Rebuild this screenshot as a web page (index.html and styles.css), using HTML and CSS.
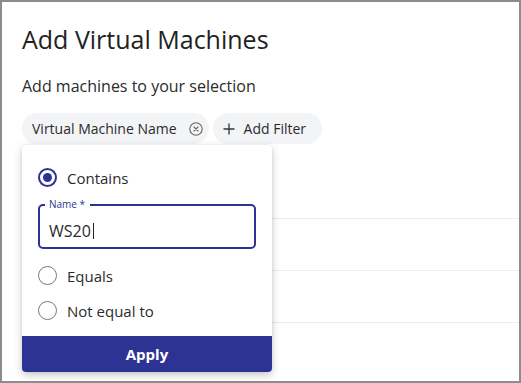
FILE: index.html
```html
<!DOCTYPE html>
<html lang="en">

<head>
    <meta charset="UTF-8">
    <meta name="viewport" content="width=device-width, initial-scale=1.0">
    <title>Add Virtual Machines</title>
    <link rel="stylesheet" href="styles.css">
</head>

<body>
    <div class="dialog">
        <h1>Add Virtual Machines</h1>
        <p class="subtitle">Add machines to your selection</p>

        <div class="filter-bar">
            <div class="chip">
                <span>Virtual Machine Name</span>
                <svg class="chip-clear" width="14" height="14" viewBox="0 0 14 14">
                    <circle cx="7" cy="7" r="6.2" fill="none" stroke="#666" stroke-width="1.1" />
                    <path d="M5 5 L9 9 M9 5 L5 9" stroke="#666" stroke-width="1.1" stroke-linecap="round" />
                </svg>
            </div>
            <div class="chip chip-add">
                <svg width="12" height="12" viewBox="0 0 12 12">
                    <path d="M6 0.5 V11.5 M0.5 6 H11.5" stroke="#333" stroke-width="1.3" />
                </svg>
                <span>Add Filter</span>
            </div>

            <div class="popover">
                <label class="radio-row">
                    <span class="radio checked"></span>
                    <span>Contains</span>
                </label>

                <div class="field">
                    <span class="field-label">Name *</span>
                    <div class="field-value">WS20<span class="caret"></span></div>
                </div>

                <label class="radio-row first-after-field">
                    <span class="radio"></span>
                    <span>Equals</span>
                </label>
                <label class="radio-row">
                    <span class="radio"></span>
                    <span>Not equal to</span>
                </label>

                <button class="apply">Apply</button>
            </div>
        </div>

        <div class="table">
            <div class="table-head"></div>
            <div class="table-row"></div>
            <div class="table-row"></div>
            <div class="table-row"></div>
        </div>
    </div>
</body>

</html>
```

FILE: styles.css
```css
body {
    font-family: 'Open Sans', 'Noto Sans', Arial, sans-serif;
    margin: 0;
    background-color: white;
    color: #2b2b2b;
}

.dialog {
    box-sizing: border-box;
    width: 521px;
    height: 383px;
    border: 2px solid #8c8c8c;
    padding: 0 0 0 20px;
    overflow: hidden;
}

h1 {
    font-size: 25px;
    font-weight: 400;
    line-height: 32px;
    margin: 21px 0 0 0;
    color: #222;
}

.subtitle {
    font-size: 16px;
    line-height: 22px;
    margin: 20px 0 0 0;
    color: #2b2b2b;
}

.filter-bar {
    position: relative;
    display: flex;
    gap: 4px;
    margin-top: 16px;
}

.chip {
    display: flex;
    align-items: center;
    height: 31px;
    padding: 0 6px 0 10px;
    gap: 12px;
    border-radius: 16px;
    background-color: #f3f4f6;
    font-size: 14px;
    color: #2b2b2b;
}

.chip-add {
    padding: 0 16px 0 10px;
    gap: 9px;
}

.popover {
    position: absolute;
    top: 32px;
    left: 0;
    width: 250px;
    box-sizing: border-box;
    padding: 15px 16px 0;
    background-color: white;
    border-radius: 4px;
    box-shadow: 0 3px 8px rgba(0, 0, 0, 0.22), 0 0 2px rgba(0, 0, 0, 0.08);
    overflow: hidden;
    z-index: 2;
}

.radio-row {
    display: flex;
    align-items: center;
    height: 35px;
    gap: 10px;
    font-size: 15px;
    color: #2b2b2b;
}

.radio {
    box-sizing: border-box;
    width: 19px;
    height: 19px;
    border-radius: 50%;
    border: 1.5px solid #7a7a7a;
    display: flex;
    align-items: center;
    justify-content: center;
}

.radio.checked {
    border: 2px solid #2d3392;
}

.radio.checked::after {
    content: '';
    width: 9px;
    height: 9px;
    border-radius: 50%;
    background-color: #2d3392;
}

.field {
    position: relative;
    box-sizing: border-box;
    height: 45px;
    margin-top: 9px;
    border: 2px solid #2d3392;
    border-radius: 5px;
    padding: 0 9px;
    display: flex;
    align-items: center;
}

.field-label {
    position: absolute;
    top: -8px;
    left: 5px;
    padding: 0 5px 0 4px;
    background-color: white;
    font-size: 10px;
    line-height: 12px;
    color: #2d3392;
}

.field-value {
    display: flex;
    align-items: center;
    margin-top: 8px;
    font-size: 16px;
    color: #2b2b2b;
}

.caret {
    width: 1px;
    height: 16px;
    margin-left: 2px;
    background-color: #222;
}

.first-after-field {
    margin-top: 9px;
}

.apply {
    display: block;
    width: calc(100% + 32px);
    height: 36px;
    margin: 8px -16px 0;
    border: none;
    background-color: #2d3392;
    color: white;
    font-family: inherit;
    font-size: 15px;
    font-weight: 700;
}

.table {
    margin-top: 23px;
    width: 560px;
}

.table-head {
    height: 51px;
}

.table-row {
    height: 51px;
    border-top: 1px solid #ececec;
}
```
